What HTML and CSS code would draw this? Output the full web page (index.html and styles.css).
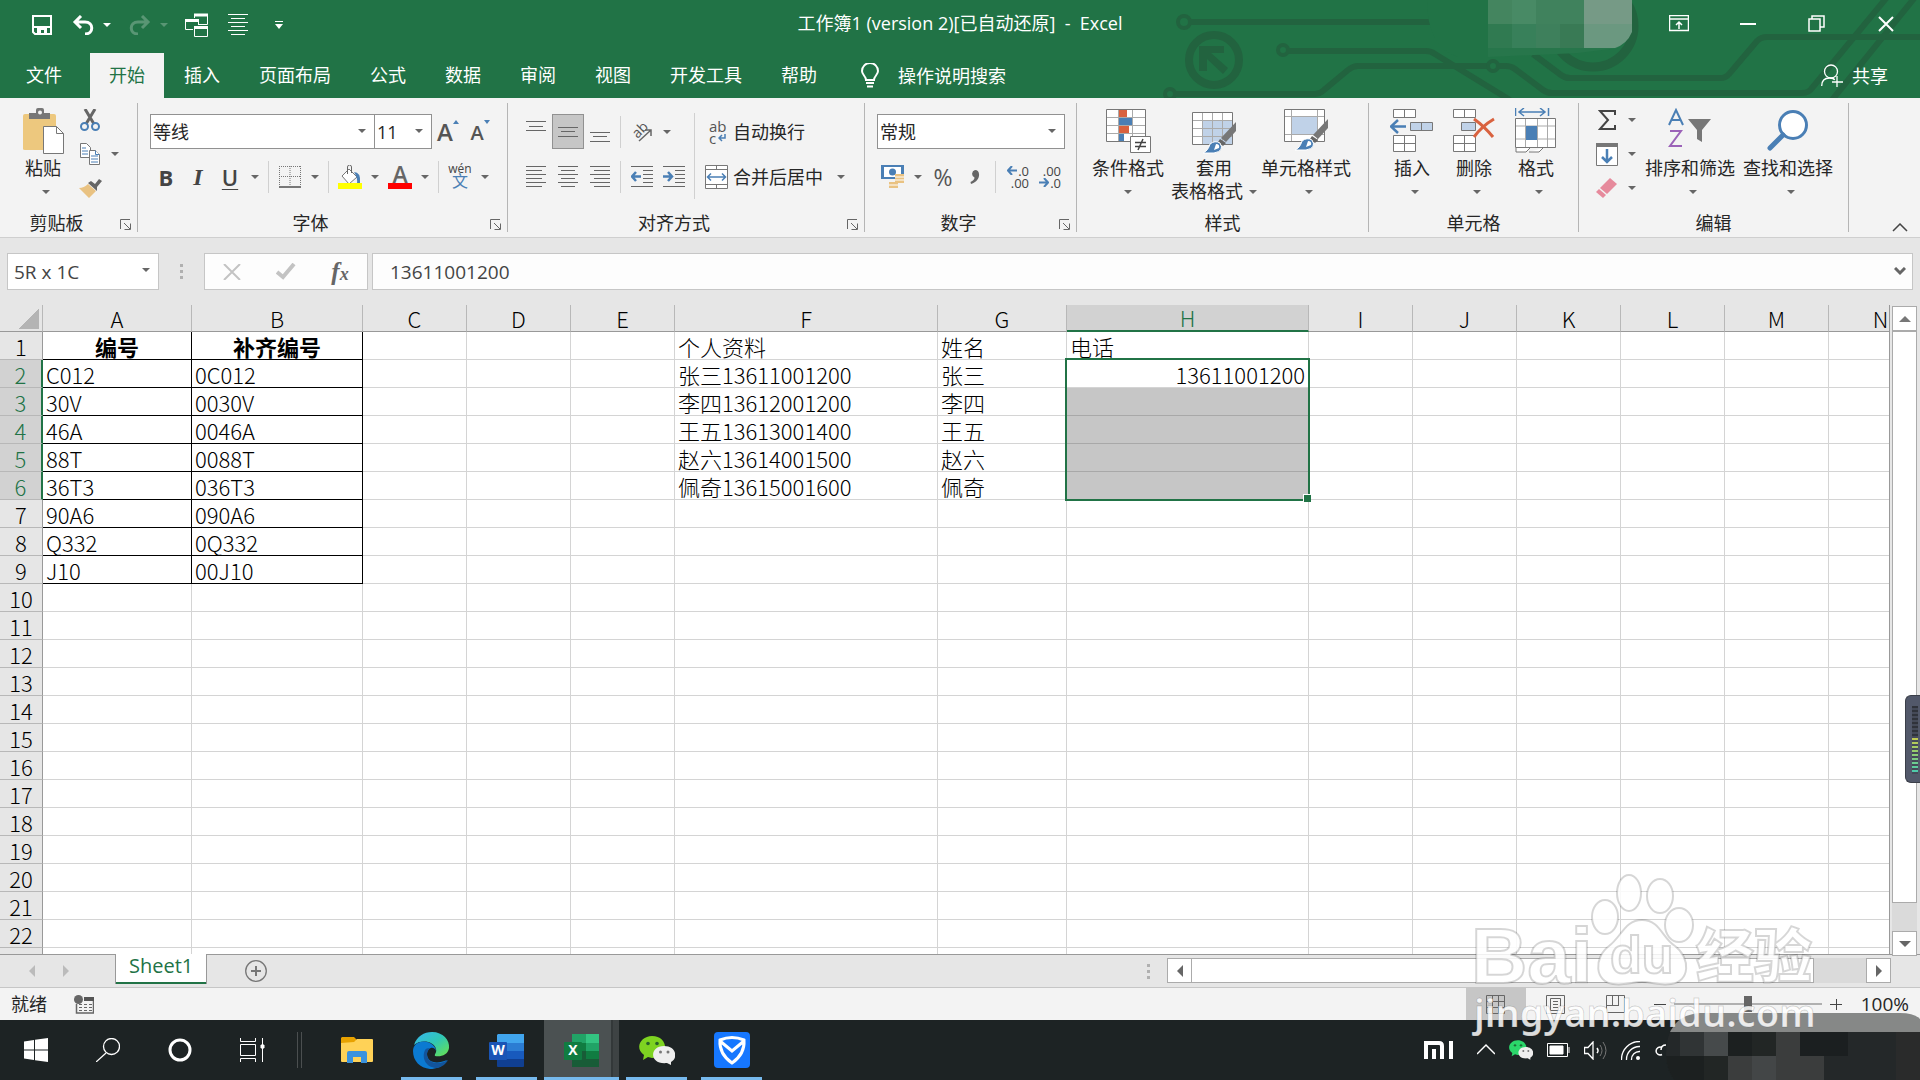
FILE: index.html
```html
<!DOCTYPE html>
<html lang="zh-CN">
<head>
  <meta charset="UTF-8" />
  <meta name="viewport" content="width=device-width, initial-scale=1.0" />
  <title>工作簿1 - Excel</title>
  <link rel="stylesheet" href="styles.css">
</head>
<body>
  <header class="header">
    <svg class="circuit" width="760" height="98" viewBox="0 0 760 98" fill="none" stroke="#22633f" stroke-width="6">
      <circle cx="24" cy="22" r="6" stroke-width="4"/><path d="M31 22H300"/>
      <circle cx="54" cy="60" r="25" stroke-width="8"/>
      <path d="M39 46h25v7H51l17 15-5 6-16-15v12h-8z" fill="#22633f" stroke="none"/>
      <circle cx="123" cy="50" r="5" stroke-width="4"/><path d="M129 51H266q5 0 9 3L350 100"/>
      <circle cx="10" cy="94" r="5" stroke-width="4"/><path d="M16 94H155q5 0 9-4l24-20q5-4 10-4H328"/>
      <circle cx="333" cy="66" r="5" stroke-width="4"/><path d="M339 66h7q5 0 9 3l28 21q4 3 9 3H642q7 0 10-5L728-4"/>
      <path d="M373 54l28 21q4 3 9 3H560q6 0 9-4l28-33q4-4 10-4H760"/><path d="M672 100L756-4"/>
      <circle cx="433" cy="26" r="41" stroke-width="9"/>
      <g stroke="none">
        <path d="M267 0h61v57h-30q-31-10-31-57z" fill="#217346"/>
        <path d="M328 24h130v24l-40 5-90 4z" fill="#27764b"/>
        <path d="M328 0h24v24h-24z" fill="#44855f"/><path d="M352 0h24v24h-24z" fill="#488a65"/><path d="M376 0h48v24h-48z" fill="#40825d"/>
        <path d="M328 24h24v24h-24z" fill="#307a51"/><path d="M352 24h24v24h-24z" fill="#38805a"/><path d="M376 24h24v24h-24z" fill="#3e805c"/><path d="M400 24h24v24h-24z" fill="#397a55"/>
        <path d="M424 0h48v24h-48z" fill="#769a86"/><path d="M424 24h48v8q-5 12-17 16h-31z" fill="#6b9880"/>
      </g>
    </svg>
    <div class="titlebar">
      <div class="qat">
        <button aria-label="保存"><svg width="20" height="20" viewBox="0 0 20 20"><path d="M1 1h18v18H3l-2-2z" fill="none" stroke="#fff" stroke-width="2"/><path d="M2 11h16v2H2zM5 13h10v6h-3v-4H9v4H5z" fill="#fff"/></svg></button>
        <span><button aria-label="撤消"><svg width="22" height="20" viewBox="0 0 22 20" fill="none" stroke="#fff" stroke-width="3"><path d="M9 1L3 7l6 6M3 7h10c9 0 9 12 0 12"/></svg></button><button class="drop" aria-label="撤消列表"><i class="caret"></i></button></span>
        <span class="dim"><button aria-label="恢复"><svg width="22" height="20" viewBox="0 0 22 20" fill="none" stroke="#fff" stroke-width="3"><path d="M13 1l6 6-6 6M19 7H9c-9 0-9 12 0 12"/></svg></button><button class="drop" aria-label="恢复列表"><i class="caret"></i></button></span>
        <button aria-label="切换窗口"><svg width="24" height="24" viewBox="0 0 24 24" fill="none" stroke="#fff"><path d="M9.500 5V1.500h13v10H14M8 16.500H.5v-10h13V12M9.500 13.500h13v10h-13z"/><path d="M9 2h14M0 7.500h14M9 14.500h14" stroke-width="3"/></svg></button>
        <button aria-label="居中"><svg width="20" height="22" viewBox="0 0 20 22" stroke="#fff"><path d="M0 .5h20M3 4.500h14M0 8.500h20M3 12.500h14M0 16.500h20M3 20.500h14"/></svg></button>
        <button aria-label="自定义快速访问工具栏"><svg width="8" height="8" viewBox="0 0 8 8" fill="#fff"><path d="M0 0h8v1H0zM0 3h8L4 8z"/></svg></button>
      </div>
      <div class="title">工作簿1 (version 2)[已自动还原]&nbsp; -&nbsp; Excel</div>
      <div class="winbtns">
        <button aria-label="功能区显示选项"><svg width="20" height="17" viewBox="0 0 20 17" fill="none" stroke="#fff"><path d="M.5.5h19v15H.5zM1 4h18M10 14V7M7 10l3-3 3 3" stroke-width="1.500"/></svg></button>
        <button aria-label="最小化"><svg width="16" height="17" viewBox="0 0 16 17" stroke="#fff"><path d="M0 9h16" stroke-width="2"/></svg></button>
        <button aria-label="还原"><svg width="17" height="17" viewBox="0 0 17 17" fill="none" stroke="#fff" stroke-width="1.500"><path d="M1 4h11v12H1zM4 4V1h12v11h-4"/></svg></button>
        <button aria-label="关闭"><svg width="16" height="16" viewBox="0 0 16 16" stroke="#fff" stroke-width="2"><path d="M1 1l14 14M15 1L1 15"/></svg></button>
      </div>
    </div>
    <nav class="tabs">
      <a href="#" class="file">文件</a>
      <a href="#" class="active">开始</a>
      <a href="#">插入</a>
      <a href="#">页面布局</a>
      <a href="#">公式</a>
      <a href="#">数据</a>
      <a href="#">审阅</a>
      <a href="#">视图</a>
      <a href="#">开发工具</a>
      <a href="#">帮助</a>
      <button class="tell"><svg width="18" height="25" viewBox="0 0 18 25" fill="none" stroke="#fff" stroke-width="2"><path d="M5 17c0-4-4-5-4-9a8 8 0 0 1 16 0c0 4-4 5-4 9zM5 20h8M6 23.500h6"/></svg>操作说明搜索</button>
      <button class="share"><svg width="22" height="23" viewBox="0 0 22 23" fill="none" stroke="#fff" stroke-width="1.300"><circle cx="10" cy="7.500" r="6.500"/><path d="M.7 22c0-5 3-8 8-8 2 0 4 0 5 2M16 12v11M11 18h11"/></svg>共享</button>
    </nav>
  </header>

  <section class="ribbon">
    <div class="group g-clip">
      <div class="body">
        <button class="big paste"><svg width="41" height="46" viewBox="0 0 41 46"><path d="M2 6h29q2 0 2 2v33q0 1-2 1H2q-2 0-2-1V8q0-2 2-2z" fill="#edc87e"/><path d="M6 5h7V2q0-2 2-2h4q2 0 2 2v3h6v6H6z" fill="#777"/><circle cx="17" cy="4.500" r="2" fill="#f3f3f3"/><path d="M20.500 18.500h13l7 7v20h-20z" fill="#fff" stroke="#777"/><path d="M33.500 18.500v7h7" fill="none" stroke="#777"/></svg><span>粘贴</span><span class="line"><i class="caret"></i></span></button>
        <div class="stack">
          <div><button class="tool" aria-label="剪切"><svg width="20" height="22" viewBox="0 0 20 22" fill="none"><path d="M5 0l9 15M15 0L6 15" stroke="#666" stroke-width="3"/><circle cx="4.500" cy="17.500" r="3.500" stroke="#4a7fb5" stroke-width="2"/><circle cx="15.500" cy="17.500" r="3.500" stroke="#4a7fb5" stroke-width="2"/></svg></button></div>
          <div><button class="tool" aria-label="复制"><svg width="20" height="22" viewBox="0 0 20 22" fill="#fff" stroke="#777"><path d="M.5.5h6l4 4v10H.5z"/><path d="M2 5h4M2 8h6M2 11h6" stroke="#4a7fb5"/><path d="M9.500 7.500h6l4 4v10h-10z"/><path d="M15.500 7.500v4h4M11 13h7M11 16h7M11 19h7" stroke="#4a7fb5"/></svg></button><button class="drop" aria-label="复制选项"><i class="caret"></i></button></div>
          <div><button class="tool" aria-label="格式刷"><svg width="23" height="20" viewBox="0 0 23 20"><path d="M0 10q5 0 9-4l8 7-7 7z" fill="#e9c282"/><path d="M9 5l3-2 4 3 4-5 3 2-5 6v4z" fill="#666"/></svg></button></div>
        </div>
      </div>
      <div class="foot"><span>剪贴板</span><button aria-label="剪贴板设置"><svg class="launch" width="11" height="11" viewBox="0 0 11 11" fill="none" stroke="#666"><path d="M.5 10V.5H10M4 4l6 6M10.500 4.500v6h-6"/></svg></button></div>
    </div>

    <div class="group g-font">
      <div class="body rows">
        <div class="row">
          <div class="combo c-font"><select aria-label="字体"><option>等线</option></select><i class="caret"></i></div>
          <div class="combo c-size"><select aria-label="字号"><option>11</option></select><i class="caret"></i></div>
          <button class="tool fa" aria-label="增大字号"><b class="fa-big">A</b><svg width="6" height="4" viewBox="0 0 6 4"><path d="M0 4h6L3 0z" fill="#4a7fb5"/></svg></button>
          <button class="tool fa" aria-label="减小字号"><b class="fa-small">A</b><svg width="6" height="4" viewBox="0 0 6 4"><path d="M0 0h6L3 4z" fill="#4a7fb5"/></svg></button>
        </div>
        <div class="row">
          <button class="tool b">B</button><button class="tool i">I</button><button class="tool u">U</button><button class="drop" aria-label="下划线"><i class="caret"></i></button>
          <i class="sep"></i>
          <button class="tool" aria-label="边框"><svg width="22" height="22" viewBox="0 0 22 22" fill="none" stroke="#777"><path d="M.5 0v20M21.500 0v20M11 0v20M0 .5h22M0 10.500h22" stroke-dasharray="1 1"/><path d="M0 21h22" stroke-width="2"/></svg></button><button class="drop" aria-label="边框选项"><i class="caret"></i></button>
          <i class="sep"></i>
          <button class="tool" aria-label="填充颜色"><svg width="24" height="24" viewBox="0 0 24 24"><path d="M11 4l8 8-8 7-7-8z" fill="#fff" stroke="#777"/><path d="M9.500 9V2q0-2 2-2t2 2v6" fill="none" stroke="#666"/><path d="M16 7q7 0 6 11l-3 1q1-6-3-12z" fill="#4a7fb5"/><path d="M0 18h24v6H0z" fill="#ff0"/></svg></button><button class="drop" aria-label="填充颜色选项"><i class="caret"></i></button>
          <button class="tool fontcolor" aria-label="字体颜色">A</button><button class="drop" aria-label="字体颜色选项"><i class="caret"></i></button>
          <i class="sep"></i>
          <button class="tool wen" aria-label="拼音"><span>wén</span><em>文</em></button><button class="drop" aria-label="拼音选项"><i class="caret"></i></button>
        </div>
      </div>
      <div class="foot"><span>字体</span><button aria-label="字体设置"><svg class="launch" width="11" height="11" viewBox="0 0 11 11" fill="none" stroke="#666"><path d="M.5 10V.5H10M4 4l6 6M10.500 4.500v6h-6"/></svg></button></div>
    </div>

    <div class="group g-align">
      <div class="body">
        <div class="rows">
          <div class="row">
            <button class="tool" aria-label="顶端对齐"><svg width="20" height="22" viewBox="0 0 20 22" stroke="#666"><path d="M0 .5h20M3 5.500h14M0 9.500h20"/></svg></button>
            <button class="tool on" aria-label="垂直居中"><svg width="20" height="22" viewBox="0 0 20 22" stroke="#666"><path d="M0 6.500h20M3 10.500h14M0 15.500h20"/></svg></button>
            <button class="tool" aria-label="底端对齐"><svg width="20" height="22" viewBox="0 0 20 22" stroke="#666"><path d="M0 11.500h20M3 15.500h14M0 20.500h20"/></svg></button>
            <i class="sep"></i>
            <button class="tool" aria-label="方向"><svg width="22" height="22" viewBox="0 0 22 22"><text x="0" y="14" transform="rotate(-45 8 8)" class="ab">ab</text><path d="M8 20L20 9M14 9h6v6" fill="none" stroke="#666" stroke-width="1.500"/></svg></button><button class="drop" aria-label="方向选项"><i class="caret"></i></button>
          </div>
          <div class="row">
            <button class="tool" aria-label="左对齐"><svg width="20" height="22" viewBox="0 0 20 22" stroke="#666"><path d="M0 .5h20M0 4.500h16M0 8.500h20M0 12.500h16M0 16.500h20M0 20.500h16"/></svg></button>
            <button class="tool" aria-label="居中"><svg width="20" height="22" viewBox="0 0 20 22" stroke="#666"><path d="M0 .5h20M3 4.500h14M0 8.500h20M3 12.500h14M0 16.500h20M3 20.500h14"/></svg></button>
            <button class="tool" aria-label="右对齐"><svg width="20" height="22" viewBox="0 0 20 22" stroke="#666"><path d="M0 .5h20M4 4.500h16M0 8.500h20M4 12.500h16M0 16.500h20M4 20.500h16"/></svg></button>
            <i class="sep"></i>
            <button class="tool" aria-label="减少缩进量"><svg width="22" height="22" viewBox="0 0 22 22" stroke="#666"><path d="M0 .5h22M12 4.500h10M12 8.500h10M12 12.500h10M12 16.500h10M0 20.500h22"/><path d="M5 6l-4 4.500 4 4.500M1 10.500h9" fill="none" stroke="#4a7fb5" stroke-width="2.500"/></svg></button>
            <button class="tool" aria-label="增加缩进量"><svg width="22" height="22" viewBox="0 0 22 22" stroke="#666"><path d="M0 .5h22M12 4.500h10M12 8.500h10M12 12.500h10M12 16.500h10M0 20.500h22"/><path d="M5 6l4 4.500-4 4.500M0 10.500h9" fill="none" stroke="#4a7fb5" stroke-width="2.500"/></svg></button>
          </div>
        </div>
        <i class="sep tall"></i>
        <div class="rows">
          <div class="row">
            <button class="wide"><span class="wrapicon"><span>ab</span><span>c<svg width="8" height="8" viewBox="0 0 8 8" fill="none" stroke="#4a7fb5" stroke-width="1.500"><path d="M7 0v4H1M4 1L1 4l3 3"/></svg></span></span>自动换行</button>
          </div>
          <div class="row">
            <button class="wide"><svg width="24" height="24" viewBox="0 0 24 24" fill="#fff" stroke="#777"><path d="M.5.500h22v23H.5zM.5 4.500h22M.5 19.500h22M11.500.500v4M11.500 19.500v4" /><path d="M3 12h17M6 8.500L2.500 12 6 15.500M17 8.500l3.500 3.500-3.500 3.500" fill="none" stroke="#4a7fb5" stroke-width="1.500"/></svg>合并后居中</button><button class="drop far" aria-label="合并选项"><i class="caret"></i></button>
          </div>
        </div>
      </div>
      <div class="foot"><span>对齐方式</span><button aria-label="对齐设置"><svg class="launch" width="11" height="11" viewBox="0 0 11 11" fill="none" stroke="#666"><path d="M.5 10V.5H10M4 4l6 6M10.500 4.500v6h-6"/></svg></button></div>
    </div>

    <div class="group g-num">
      <div class="body rows">
        <div class="row"><div class="combo c-num"><select aria-label="数字格式"><option>常规</option></select><i class="caret"></i></div></div>
        <div class="row">
          <button class="tool" aria-label="会计数字格式"><svg width="24" height="24" viewBox="0 0 24 24"><path d="M0 0h23v14H0z" fill="#4a7fb5"/><path d="M3 2h17v10H3z" fill="#fff"/><circle cx="11.500" cy="7" r="3.500" fill="#4a7fb5"/><path d="M14 9h9v9h-9zM8 17h9v6H8z" fill="#e9c282"/><path d="M14 12h9M14 15h9M8 20h9" stroke="#fff"/></svg></button><button class="drop" aria-label="货币"><i class="caret"></i></button>
          <button class="tool pct">%</button>
          <button class="tool" aria-label="千位分隔样式"><svg width="10" height="16" viewBox="0 0 10 16"><path d="M5 1c6 0 6 11-4 14l-.5-2q4-2 4-4.500A4 4 0 0 1 5 1z" fill="#666"/></svg></button>
          <i class="sep"></i>
          <button class="tool dec" aria-label="增加小数位数"><span><svg width="10" height="9" viewBox="0 0 10 9" fill="none" stroke="#4a7fb5" stroke-width="2"><path d="M5 0L1 4.500 5 9M1 4.500h9"/></svg>.0</span><span>.00</span></button>
          <button class="tool dec" aria-label="减少小数位数"><span>.00</span><span><svg width="10" height="9" viewBox="0 0 10 9" fill="none" stroke="#4a7fb5" stroke-width="2"><path d="M5 0l4 4.500L5 9M0 4.500h9"/></svg>.0</span></button>
        </div>
      </div>
      <div class="foot"><span>数字</span><button aria-label="数字设置"><svg class="launch" width="11" height="11" viewBox="0 0 11 11" fill="none" stroke="#666"><path d="M.5 10V.5H10M4 4l6 6M10.500 4.500v6h-6"/></svg></button></div>
    </div>

    <div class="group g-style">
      <div class="body">
        <button class="big"><svg width="45" height="46" viewBox="0 0 45 46"><path d="M.5 1.500h39v32H.5z" fill="#fff" stroke="#777"/><path d="M1 9.500h38M1 17.500h38M1 25.500h38M12.500 2v31M26.500 2v31" stroke="#aaa"/><path d="M13 2h8v7h-8zM13 18h10v7H13z" fill="#d9623f"/><path d="M13 10h13v7H13zM13 26h5v7h-5z" fill="#4a7fb5"/><path d="M24.500 28.500h20v16h-20z" fill="#fff" stroke="#777"/><path d="M29 34.500h11M29 38.500h11M37 31l-5 11" stroke="#444" stroke-width="1.500"/></svg><span>条件格式</span><span class="line"><i class="caret"></i></span></button>
        <button class="big"><svg width="45" height="46" viewBox="0 0 45 46"><path d="M.5 4.500h40v32H.5z" fill="#fff" stroke="#777"/><path d="M11 13h29v23H11z" fill="#c0d2e8"/><path d="M1 12.500h39M1 20.500h39M1 28.500h39M10.500 5v31M20.500 5v31M30.500 5v31" stroke="#aaa"/><path d="M44 14v9L34 34l-5-4z" fill="#777"/><path d="M28 31l6 4-3 3-5-4z" fill="#666"/><path d="M11 45q5-2 7-9 5-4 10-1 5 8-6 10z" fill="#4a7fb5" stroke="#fff"/><path d="M24 36q4 0 3 4l-5 2z" fill="#fff"/></svg><span>套用</span><span class="line">表格格式 <i class="caret"></i></span></button>
        <button class="big wider"><svg width="45" height="46" viewBox="0 0 45 46"><path d="M.5 1.500h40v32H.5z" fill="#fff" stroke="#777"/><path d="M8 9h25v17H8z" fill="#c0d2e8"/><path d="M1 8.500h39M1 26.500h39M7.500 2v31M33.500 2v31" stroke="#aaa"/><path d="M44 11v9L34 31l-5-4z" fill="#777"/><path d="M28 28l6 4-3 3-5-4z" fill="#666"/><path d="M11 42q5-2 7-9 5-4 10-1 5 8-6 10z" fill="#4a7fb5" stroke="#fff"/><path d="M24 33q4 0 3 4l-5 2z" fill="#fff"/></svg><span>单元格样式</span><span class="line"><i class="caret"></i></span></button>
      </div>
      <div class="foot"><span>样式</span></div>
    </div>

    <div class="group g-cell">
      <div class="body">
        <button class="big narrow"><svg width="44" height="46" viewBox="0 0 44 46" fill="#fff" stroke="#777"><path d="M3.500 1.500h22v8h-22zM14.500 1.500v8M3.500 27.500h22v16h-22zM14.500 27.500v16M3.500 35.500h22"/><path d="M20.500 14.500h22v8h-22zM31.500 14.500v8" fill="#c0d2e8"/><path d="M8 12l-7 6.500L8 25M1 18.500h15" fill="none" stroke="#4a7fb5" stroke-width="2.500"/></svg><span>插入</span><span class="line"><i class="caret"></i></span></button>
        <button class="big narrow"><svg width="44" height="46" viewBox="0 0 44 46" fill="#fff" stroke="#777"><path d="M1.500 1.500h22v8h-22zM12.500 1.500v8M1.500 27.500h22v16h-22zM12.500 27.500v16M1.500 35.500h22"/><path d="M9.500 14.500h14v8h-14z" fill="#c0d2e8"/><path d="M22 11q10 7 19 18M42 11Q30 18 22 29" fill="none" stroke="#d9623f" stroke-width="3"/></svg><span>删除</span><span class="line"><i class="caret"></i></span></button>
        <button class="big narrow"><svg width="42" height="46" viewBox="0 0 42 46" fill="#fff" stroke="#777"><path d="M.5 10.500h40v29H.5z"/><path d="M1 18h39M1 31h39M10.500 11v28M22.500 11v28M32.500 11v28" stroke="#aaa"/><path d="M11 18h11v14H11z" fill="#4a7fb5" stroke="none"/><path d="M1 40v4h10l4-4M14 44h10l4-4"/><path d="M.5 0v8M33.500 0v8M5 4h24M9 0L4 4l5 4M25 0l5 4-5 4" fill="none" stroke="#4a7fb5" stroke-width="1.500"/></svg><span>格式</span><span class="line"><i class="caret"></i></span></button>
      </div>
      <div class="foot"><span>单元格</span></div>
    </div>

    <div class="group g-edit">
      <div class="body">
        <div class="stack">
          <div><button class="tool" aria-label="自动求和"><svg width="18" height="20" viewBox="0 0 18 20"><path d="M17 5V1H2l8 9-8 9h15v-4" fill="none" stroke="#444" stroke-width="2"/></svg></button><button class="drop" aria-label="求和选项"><i class="caret"></i></button></div>
          <div><button class="tool" aria-label="填充"><svg width="22" height="23" viewBox="0 0 22 23"><path d="M.5.500h21v22H.5z" fill="#fff" stroke="#777"/><path d="M0 0h22v4H0z" fill="#777"/><path d="M11 6v13M6 14l5 5 5-5" fill="none" stroke="#4a7fb5" stroke-width="2.500"/></svg></button><button class="drop" aria-label="填充选项"><i class="caret"></i></button></div>
          <div><button class="tool" aria-label="清除"><svg width="22" height="20" viewBox="0 0 22 20"><path d="M14 0l7 6-10 10-7-6z" fill="#e68a9c"/><path d="M3 11l7 6-3 3-7-6z" fill="#e68a9c"/></svg></button><button class="drop" aria-label="清除选项"><i class="caret"></i></button></div>
        </div>
        <button class="big wider"><svg width="44" height="46" viewBox="0 0 44 46" fill="none"><path d="M1 17L8 2l7 15M4 12h8" stroke="#4a7fb5" stroke-width="2"/><path d="M2 23h11L2 38h12" stroke="#9b62b8" stroke-width="2"/><path d="M20 11h23l-9 11v12l-5-3v-9z" fill="#777"/></svg><span>排序和筛选</span><span class="line"><i class="caret"></i></span></button>
        <button class="big wider"><svg width="42" height="46" viewBox="0 0 42 46"><circle cx="26" cy="17" r="13.500" fill="#fff" stroke="#4a7fb5" stroke-width="3"/><path d="M16 27L3 40" stroke="#4a7fb5" stroke-width="5" stroke-linecap="round"/></svg><span>查找和选择</span><span class="line"><i class="caret"></i></span></button>
      </div>
      <div class="foot"><span>编辑</span></div>
    </div>
    <button class="collapse" aria-label="折叠功能区"><svg width="16" height="9" viewBox="0 0 16 9" fill="none" stroke="#444" stroke-width="1.500"><path d="M1 8l7-7 7 7"/></svg></button>
  </section>

  <section class="formula">
    <div class="combo c-name"><select aria-label="名称框"><option>5R x 1C</option></select><i class="caret"></i></div>
    <span class="dots"><i></i><i></i><i></i></span>
    <div class="fxbox">
      <button aria-label="取消"><svg width="18" height="16" viewBox="0 0 18 16" stroke="#c3c3c3" stroke-width="2"><path d="M1 0l16 16M17 0L1 16"/></svg></button>
      <button aria-label="输入"><svg width="20" height="17" viewBox="0 0 20 17" fill="none" stroke="#c3c3c3" stroke-width="4"><path d="M1 9l6 5L18 1"/></svg></button>
      <button class="fx">f<small>x</small></button>
    </div>
    <div class="inputbox"><input type="text" aria-label="编辑栏" value="13611001200"><svg width="12" height="9" viewBox="0 0 12 9" fill="none" stroke="#666" stroke-width="3"><path d="M1 1l5 5 5-5"/></svg></div>
  </section>

  <main class="sheet">
    <div class="gridwrap">
      <table class="grid">
        <colgroup><col class="w-head"><col class="w-a"><col class="w-b"><col><col><col><col class="w-f"><col class="w-g"><col class="w-h"><col><col><col><col><col><col></colgroup>
        <thead><tr id="letters"></tr></thead>
        <tbody id="cells"></tbody>
      </table>
    </div>
    <div class="vscroll">
      <button aria-label="向上"><svg width="12" height="6" viewBox="0 0 12 6"><path d="M0 6h12L6 0z" fill="#777"/></svg></button>
      <div class="thumb"></div>
      <button aria-label="向下"><svg width="12" height="6" viewBox="0 0 12 6"><path d="M0 0h12L6 6z" fill="#666"/></svg></button>
    </div>
  </main>

  <section class="sheetbar">
    <div class="sheetnav">
      <button aria-label="上一个"><svg width="6" height="12" viewBox="0 0 6 12"><path d="M6 0v12L0 6z" fill="#bbb"/></svg></button>
      <button aria-label="下一个"><svg width="6" height="12" viewBox="0 0 6 12"><path d="M0 0v12l6-6z" fill="#bbb"/></svg></button>
    </div>
    <a href="#" class="sheettab">Sheet1</a>
    <button class="addsheet" aria-label="新工作表"><svg width="22" height="22" viewBox="0 0 22 22" fill="none" stroke="#777"><circle cx="11" cy="11" r="10.300" stroke-width="1.300"/><path d="M11 6v10M6 11h10" stroke-width="2"/></svg></button>
    <span class="dots"><i></i><i></i><i></i></span>
    <div class="hscroll">
      <button aria-label="向左"><svg width="6" height="12" viewBox="0 0 6 12"><path d="M6 0v12L0 6z" fill="#666"/></svg></button>
      <div class="thumb"></div>
      <button aria-label="向右"><svg width="6" height="12" viewBox="0 0 6 12"><path d="M0 0v12l6-6z" fill="#666"/></svg></button>
    </div>
  </section>

  <footer class="status">
    <span>就绪</span>
    <svg width="20" height="19" viewBox="0 0 20 19" fill="none" stroke="#666"><path d="M2.500 9v9h17V4" stroke-width="1.500"/><path d="M10 2h10v4H10z" fill="#555" stroke="none"/><circle cx="4.500" cy="4.500" r="4.500" fill="#666" stroke="none"/><path d="M5 9.500h13M5 12.500h13M5 15.500h13" stroke-dasharray="3 2"/></svg>
    <div class="views">
      <button class="on" aria-label="普通"><svg width="19" height="19" viewBox="0 0 19 19" fill="none" stroke="#666"><path d="M.5.500h18v18H.5zM.5 6.500h18M.5 12.500h18M6.500.500v18M12.500.500v18"/></svg></button>
      <button aria-label="页面布局"><svg width="19" height="19" viewBox="0 0 19 19" fill="none" stroke="#666"><path d="M.5.500h18v18H.5zM4.500 3.500h10v12h-10zM7 6.500h5M7 9.500h5M7 12.500h5"/></svg></button>
      <button aria-label="分页预览"><svg width="19" height="19" viewBox="0 0 19 19" fill="none" stroke="#666"><path d="M.5.500h18v17H.5zM6.500 1v10M12.500 1v10M0 10.500h13"/></svg></button>
    </div>
    <div class="zoom">
      <button aria-label="缩小"><svg width="12" height="12" viewBox="0 0 12 12" stroke="#444"><path d="M0 6.500h12"/></svg></button>
      <input type="range" aria-label="缩放" min="0" max="100" value="50">
      <button aria-label="放大"><svg width="12" height="12" viewBox="0 0 12 12" stroke="#444"><path d="M0 6.500h12M6.500 1v11"/></svg></button>
      <span>100%</span>
    </div>
  </footer>

  <div class="taskbar">
    <button class="sys" aria-label="开始"><svg width="24" height="24" viewBox="0 0 24 24" fill="#fff"><path d="M0 3.500L10 2v9.500H0zM11 1.800L24 0v11.500H11zM0 12.500h10V22L0 20.500zM11 12.500h13V24l-13-1.800z"/></svg></button>
    <button class="sys" aria-label="搜索"><svg width="24" height="24" viewBox="0 0 24 24" fill="none" stroke="#fff" stroke-width="1.300"><circle cx="15.500" cy="8.500" r="8"/><path d="M10 15L0 24"/></svg></button>
    <button class="sys" aria-label="Cortana"><svg width="24" height="24" viewBox="0 0 24 24" fill="none" stroke="#fff" stroke-width="3"><circle cx="12" cy="12" r="10"/></svg></button>
    <button class="sys" aria-label="任务视图"><svg width="25" height="24" viewBox="0 0 25 24" fill="none" stroke="#fff"><path d="M.5 0v3.500h15V0M.5 6.500h15v11H.5zM.5 24v-3.500h15V24M22.500 0v24"/><path d="M21 7h3v3h-3z" fill="#fff"/></svg></button>
    <i class="split"></i>
    <button class="app" aria-label="文件资源管理器"><svg width="32" height="27" viewBox="0 0 32 27"><path d="M1 0h12l3 3v4H0V1z" fill="#e8a200"/><path d="M0 6l13-1 3-3h15q1 0 1 1v21q0 1-1 1H1q-1 0-1-1z" fill="#ffd257"/><path d="M8 14h16q2 0 2 2v10h-6v-6h-8v6H6V16q0-2 2-2z" fill="#3b92dd"/></svg></button>
    <button class="app run" aria-label="Edge"><svg width="37" height="37" viewBox="0 0 37 37"><defs><linearGradient id="eg" x1="0" y1="0" x2="1" y2="1"><stop offset="0" stop-color="#36b5f2"/><stop offset=".5" stop-color="#30c7b5"/><stop offset="1" stop-color="#6be34b"/></linearGradient></defs><path d="M1 13C4 4 11 0 19 0c11 0 18 8 17 16-1 7-8 9-14 8-1-2 2-3 1-7C21 9 8 7 1 13z" fill="url(#eg)"/><path d="M0 19c0-8 9-12 17-8 4 2 6 5 6 8-2-6-9-3-9 3 0 8 9 11 20 6-4 7-11 9-17 9C7 36 0 29 0 19z" fill="#0b7ad1"/><path d="M12 18c-4 9 2 18 12 18 5-1 9-4 11-8-10 6-21 3-21-6q0-3 3-6-4 0-5 2z" fill="#12549b"/></svg></button>
    <button class="app run office" aria-label="Word"><svg width="36" height="33" viewBox="0 0 36 33"><path d="M9 0h26v9H8V1z" fill="#41a5ee"/><path d="M8 9h27v8H8z" fill="#2b7cd3"/><path d="M8 17h27v8H8z" fill="#185abd"/><path d="M8 25h27v7q0 1-1 1H9q-1 0-1-1z" fill="#103f91"/><rect y="8" width="18" height="18" rx="1" fill="#1a55b6"/></svg><b>W</b></button>
    <button class="app run office current" aria-label="Excel"><svg width="36" height="33" viewBox="0 0 36 33"><path d="M8 0h14v9H8z" fill="#21a366"/><path d="M22 0h13v9H22z" fill="#33c481"/><path d="M8 9h14v8H8zM22 17h13v8H22z" fill="#107c41"/><path d="M22 9h13v8H22z" fill="#21a366"/><path d="M8 17h14v8H8zM8 25h27v8H8z" fill="#185c37"/><rect y="8" width="18" height="18" rx="1" fill="#107c41"/></svg><b>X</b></button>
    <button class="app run" aria-label="微信"><svg width="36" height="29" viewBox="0 0 36 29"><path d="M13 0c17 0 18 22 0 22l-4-1-5 3 1-5C-5 12 2 0 13 0z" fill="#7ed321"/><circle cx="9" cy="7.500" r="1.800" fill="#27622a"/><circle cx="18" cy="7.500" r="1.800" fill="#27622a"/><path d="M25 10c13 0 14 13 7 16v3l-4-2c-18 2-18-17-3-17z" fill="#eee"/><circle cx="21.500" cy="16" r="1.500" fill="#777"/><circle cx="29" cy="16" r="1.500" fill="#777"/></svg></button>
    <button class="app run" aria-label="电脑管家"><svg width="36" height="36" viewBox="0 0 36 36" fill="none" stroke="#fff" stroke-width="3"><rect width="36" height="36" rx="4" fill="#1677ff" stroke="none"/><path d="M6 8q12-5 24 0 1 14-12 23Q5 22 6 8zM6 9l12 10L30 9"/></svg></button>
    <div class="tray">
      <svg width="29" height="18" viewBox="0 0 29 18" fill="#fff"><path d="M0 0h15q5 0 5 5v13h-4V5q0-1-1-1H4v14H0zM8 8h4v10H8zM25 0h4v18h-4z"/></svg>
      <svg width="18" height="18" viewBox="0 0 18 18" fill="none" stroke="#fff" stroke-width="1.500"><path d="M0 13l9-9 9 9"/></svg>
      <svg width="24" height="20" viewBox="0 0 36 29"><path d="M13 0c17 0 18 22 0 22l-4-1-5 3 1-5C-5 12 2 0 13 0z" fill="#2bd66a"/><circle cx="9" cy="7.500" r="1.800" fill="#1b6b36"/><circle cx="18" cy="7.500" r="1.800" fill="#1b6b36"/><path d="M25 10c13 0 14 13 7 16v3l-4-2c-18 2-18-17-3-17z" fill="#eee"/><circle cx="21.500" cy="16" r="1.500" fill="#777"/><circle cx="29" cy="16" r="1.500" fill="#777"/></svg>
      <svg width="23" height="14" viewBox="0 0 23 14" fill="none" stroke="#fff"><path d="M.5.500h20v13H.5zM22 4v6"/><path d="M3 3h13v8H3z" fill="#fff"/></svg>
      <svg width="23" height="19" viewBox="0 0 23 19" fill="none" stroke="#fff"><path d="M.5 6.500H4l5-5.500v17l-5-5.500H.5z" stroke-width="1.300"/><path d="M13 7q2 2.500 0 5" stroke-width="1.500"/><path d="M16 4q4 5.500 0 11M19 1q6 8.500 0 17" stroke="#777"/></svg>
      <svg width="19" height="19" viewBox="0 0 19 19" fill="none" stroke="#fff"><path d="M.5 19A18 18 0 0 1 19 .5M5.500 19A13 13 0 0 1 19 5.500M10.500 19A8 8 0 0 1 19 10.500" stroke-width="1.300"/><circle cx="17" cy="17" r="2" fill="#fff" stroke="none"/></svg>
      <svg width="12" height="12" viewBox="0 0 12 12" fill="none" stroke="#fff" stroke-width="1.500"><path d="M8 3.500a4 4 0 1 0 0 7M12 1q-5 0-5 5"/></svg>
    </div>
  </div>

  <svg class="mosaic" width="254" height="67" viewBox="0 0 254 67">
    <defs><clipPath id="mc"><path d="M34 0h200q14 0 20 6v61H8Q-4 50 2 25 8 2 34 0z"/></clipPath></defs>
    <g clip-path="url(#mc)">
      <path d="M0 0h254v19H0z" fill="#868887"/><path d="M0 19h254v48H0z" fill="#242829"/>
      <path d="M14 19h24v24H14z" fill="#303435"/><path d="M38 19h24v24H38z" fill="#464a4b"/><path d="M62 19h24v24H62zM0 43h38v24H0z" fill="#1c2020"/><path d="M86 19h24v24H86zM38 43h24v24H38z" fill="#222625"/><path d="M110 19h24v24h-24zM62 43h24v24H62zM110 43h48v24h-48z" fill="#3b3d3d"/><path d="M134 19h48v24h-48z" fill="#1b1f20"/><path d="M86 43h24v24H86z" fill="#434647"/><path d="M230 19h24v48h-24z" fill="#2a2b2b"/>
    </g>
  </svg>

  <svg class="watermark" width="350" height="172" viewBox="0 0 350 172">
    <g class="ink">
      <text x="1" y="113" class="wm-bai">Bai</text>
      <ellipse cx="135" cy="47" rx="13" ry="17"/><ellipse cx="159" cy="23" rx="12" ry="18"/><ellipse cx="190" cy="26" rx="13" ry="17"/><ellipse cx="209" cy="55" rx="14" ry="17"/>
      <path d="M172 50c18 0 20 18 33 26 16 12 15 36-4 38-12 2-18-2-29-2s-18 4-29 2c-18-2-20-26-4-38 13-10 16-26 33-26z"/>
      <text x="140" y="103" class="wm-du">du</text>
      <text x="226" y="107" class="wm-cn">经验</text>
    </g>
    <text x="4" y="157" class="wm-url">jingyan.baidu.com</text>
  </svg>

  <div class="meter"><i></i></div>

  <script>
    const letters = "ABCDEFGHIJKLMN".split("");
    const rowCount = 23;
    const data = {
      A: ["编号", "C012", "30V", "46A", "88T", "36T3", "90A6", "Q332", "J10"],
      B: ["补齐编号", "0C012", "0030V", "0046A", "0088T", "036T3", "090A6", "0Q332", "00J10"],
      F: ["个人资料", "张三13611001200", "李四13612001200", "王五13613001400", "赵六13614001500", "佩奇13615001600"],
      G: ["姓名", "张三", "李四", "王五", "赵六", "佩奇"],
      H: ["电话", "13611001200"]
    };

    let head = '<th class="corner"></th>';
    letters.forEach(l => {
      head += `<th class="${l === "H" ? "picked" : ""}">${l}</th>`;
    });
    document.getElementById("letters").innerHTML = head;

    let body = "";
    for (let r = 1; r <= rowCount; r++) {
      const picked = r >= 2 && r <= 6;
      // the last row is only a sliver above the sheet tabs
      body += `<tr><th class="${picked ? "picked" : ""}">${r < rowCount ? r : ""}</th>`;
      letters.forEach(l => {
        const text = (data[l] && data[l][r - 1]) || "";
        const cls = [];
        if ((l === "A" || l === "B") && r <= 9) cls.push(r === 1 ? "boxed bold" : "boxed");
        if (l === "H" && r === 2) cls.push("start");
        if (l === "H" && r > 2 && r <= 6) cls.push("shade");
        const box = l === "H" && r === 2 ? '<div class="selection"></div>' : "";
        body += `<td class="${cls.join(" ")}">${text}${box}</td>`;
      });
      body += "</tr>";
    }
    document.getElementById("cells").innerHTML = body;
  </script>
</body>
</html>
```
FILE: styles.css
```css
* {
  box-sizing: border-box;
}
body {
  margin: 0;
  height: 100vh;
  display: flex;
  flex-direction: column;
  overflow: hidden;
  position: relative;
  background: #e6e6e6;
  color: #262626;
  font-family: "Open Sans", "Noto Sans CJK SC", sans-serif;
  font-size: 18px;
  line-height: 24px;
}
button {
  display: flex;
  align-items: center;
  justify-content: center;
  margin: 0;
  padding: 0;
  border: none;
  background: none;
  color: inherit;
  font: inherit;
  white-space: nowrap;
}
select, input {
  margin: 0;
  border: none;
  outline: none;
  background: none;
  font: inherit;
}
a {
  color: inherit;
  text-decoration: none;
}
svg {
  display: block;
  flex: none;
}
.caret {
  flex: none;
  border: 4px solid transparent;
  border-top-color: #666;
  border-bottom: none;
}

/* title bar and tabs */
.header {
  flex: none;
  position: relative;
  background: #217346;
  color: #fff;
}
.circuit {
  position: absolute;
  top: 0;
  right: 0;
}
.titlebar {
  position: relative;
  display: grid;
  grid-template-columns: 1fr auto 1fr;
  height: 53px;
}
.qat {
  display: flex;
  align-items: center;
  gap: 9px;
  padding: 0 26px;
  height: 49px;
}
.qat span {
  display: flex;
}
.qat button {
  width: 32px;
}
.qat .drop {
  width: 16px;
}
.qat .caret {
  border-top-color: #fff;
}
.qat .dim {
  opacity: 0.25;
}
.title {
  line-height: 46px;
}
.winbtns {
  display: flex;
  justify-content: flex-end;
  height: 47px;
}
.winbtns button {
  width: 69px;
}
.tabs {
  position: relative;
  display: flex;
  gap: 1px;
  line-height: 44px;
  height: 45px;
}
.tabs a {
  padding: 0 19px;
}
.tabs .file {
  padding: 0 27px 0 26px;
}
.tabs .active {
  background: #f3f3f3;
  color: #217346;
}
.tell {
  gap: 19px;
  margin-left: 24px;
}
.share {
  gap: 9px;
  margin-left: auto;
  padding-right: 32px;
}

/* ribbon */
.ribbon {
  flex: none;
  display: flex;
  padding: 5px 0;
  background: #f3f3f3;
  border-bottom: 1px solid #cfcfcf;
}
.group {
  flex: none;
  display: flex;
  flex-direction: column;
  border-right: 1px solid #b5b5b5;
}
.g-clip { width: 138px; }
.g-font { width: 370px; }
.g-align { width: 357px; }
.g-num { width: 212px; }
.g-style { width: 292px; }
.g-cell { width: 210px; }
.g-edit { width: 270px; }
.body {
  display: flex;
  height: 111px;
  padding: 0 0 0 12px;
}
.g-style .body {
  padding-left: 8px;
}
.foot {
  display: flex;
  align-items: center;
  gap: 13px;
  padding: 0 6px;
  height: 18px;
}
.foot span {
  flex: 1;
  line-height: 18px;
  text-align: center;
}
.launch {
  margin-top: 2px;
}
.rows {
  display: flex;
  flex-direction: column;
  gap: 10px;
  padding-top: 11px;
}
.body.rows {
  padding-top: 11px;
}
.row {
  display: flex;
  align-items: center;
  height: 35px;
}
.tool {
  width: 32px;
  height: 35px;
}
.tool.on {
  background: #c6c6c6;
  border: 1px solid #919191;
}
.drop {
  width: 18px;
  height: 35px;
}
.far {
  margin-left: 9px;
}
.sep {
  width: 1px;
  height: 32px;
  margin: 0 5px 0 4px;
  background: #d0d0d0;
}
.sep.tall {
  height: 86px;
  margin-top: 10px;
}
.stack button {
  height: 34px;
}
.stack div {
  display: flex;
}
.big {
  flex-direction: column;
  justify-content: flex-start;
  width: 86px;
  padding-top: 5px;
  line-height: 23px;
}
.big svg {
  margin-bottom: 3px;
}
.paste {
  width: 62px;
}
.narrow {
  width: 62px;
}
.wider {
  width: 98px;
}
.line {
  display: flex;
  align-items: center;
  gap: 6px;
  height: 23px;
}
.paste .line, .narrow .line, .wider .line {
  padding-left: 6px;
}
.wide {
  gap: 4px;
  padding-left: 5px;
}
.combo {
  position: relative;
  height: 35px;
  background: #fff;
  border: 1px solid #919191;
}
.combo select {
  appearance: none;
  width: 100%;
  height: 100%;
  padding: 0 2px;
  color: #262626;
}
.combo .caret {
  position: absolute;
  top: 14px;
  right: 8px;
}
.c-font {
  width: 225px;
  margin-right: -1px;
}
.c-size { width: 58px; }
.c-num { width: 188px; }
.fa {
  align-items: flex-start;
  color: #555;
}
.fa svg {
  margin-top: 6px;
}
.fa-big, .fa-small {
  font-size: 24px;
  font-weight: 600;
  line-height: 36px;
}
.fa-small {
  font-size: 20px;
  line-height: 38px;
}
.b, .i, .u {
  color: #444;
  font-size: 22px;
  font-weight: 700;
}
.i {
  font-family: "Liberation Serif", serif;
  font-size: 24px;
  font-style: italic;
}
.u {
  font-weight: 600;
  text-decoration: underline;
  text-decoration-thickness: 1px;
  text-underline-offset: 3px;
}
.fontcolor {
  width: 24px;
  height: 24px;
  margin: 0 4px;
  border-bottom: 6px solid #f00;
  color: #666;
  font-size: 23px;
  font-weight: 600;
  line-height: 18px;
}
.wen {
  flex-direction: column;
  color: #444;
  font-size: 12px;
  line-height: 9px;
}
.wen em {
  color: #4a7fb5;
  font-size: 16px;
  font-style: normal;
  line-height: 16px;
}
.ab {
  fill: #555;
  font-size: 14px;
}
.wrapicon {
  width: 24px;
  color: #555;
  font-size: 15px;
  line-height: 12px;
}
.wrapicon span {
  display: flex;
  align-items: center;
  gap: 2px;
  padding-left: 4px;
}
.pct {
  color: #555;
  font-size: 23px;
}
.dec {
  flex-direction: column;
  align-items: flex-end;
  padding-right: 4px;
  color: #444;
  font-size: 13px;
  line-height: 12px;
}
.dec span {
  display: flex;
  align-items: center;
  gap: 1px;
}
.collapse {
  align-self: flex-end;
  width: 20px;
  margin: 0 10px 0 auto;
}

/* formula bar */
.formula {
  flex: none;
  display: flex;
  align-items: center;
  padding: 15px 7px;
  color: #444;
  font-size: 19px;
}
.c-name {
  width: 152px;
  height: 37px;
  border-color: #c6c6c6;
}
.c-name select {
  padding: 0 6px;
  color: #444;
}
.c-name .caret, .c-num .caret {
  right: 8px;
}
.dots {
  display: flex;
  flex-direction: column;
  gap: 3px;
  padding: 0 21px;
}
.dots i {
  width: 3px;
  height: 3px;
  background: #b0b0b0;
}
.fxbox, .inputbox {
  display: flex;
  align-items: center;
  height: 37px;
  background: #fdfdfd;
  border: 1px solid #c6c6c6;
}
.fxbox {
  width: 164px;
  margin-right: 4px;
}
.fxbox button {
  width: 54px;
}
.fx {
  color: #666;
  font-family: "Liberation Serif", serif;
  font-size: 25px;
  font-style: italic;
  font-weight: 700;
}
.fx small {
  padding-top: 4px;
  font-size: 18px;
}
.inputbox {
  flex: 1;
  padding: 0 6px 0 15px;
}
.inputbox input {
  flex: 1;
  color: #444;
}

/* grid */
.sheet {
  flex: 1;
  display: flex;
  min-height: 0;
  border-bottom: 1px solid #999;
}
.gridwrap {
  flex: 1;
  min-width: 0;
  overflow: hidden;
  border-right: 1px solid #999;
}
.grid {
  width: 1933px;
  table-layout: fixed;
  border-collapse: separate;
  border-spacing: 0;
  background: #fff;
  color: #000;
  font-family: "Noto Sans CJK SC", sans-serif;
  font-size: 22px;
  font-weight: 300;
  line-height: 26px;
}
col { width: 104px; }
.w-head { width: 43px; }
.w-a { width: 149px; }
.w-b { width: 171px; }
.w-f { width: 263px; }
.w-g { width: 129px; }
.w-h { width: 242px; }
.grid th, .grid td {
  height: 28px;
  padding: 0 3px;
  border-right: 1px solid #d4d4d4;
  border-bottom: 1px solid #d4d4d4;
  white-space: nowrap;
}
.grid td {
  text-align: left;
}
.grid th {
  padding: 0;
  background: #e6e6e6;
  border-color: #b8b8b8;
  font-weight: 300;
}
.grid thead th {
  height: 27px;
  border-bottom-color: #999;
  line-height: 25px;
}
.grid tbody th {
  border-right-color: #999;
}
.grid .corner {
  background: linear-gradient(135deg, transparent 50%, #b4b4b4 50%) 19px 4px / 20px 20px no-repeat #e6e6e6;
}
.grid th.picked {
  background: #d2d2d2;
  color: #217346;
}
.grid thead .picked {
  border-bottom: 2px solid #217346;
}
.grid tbody .picked {
  border-right: 2px solid #217346;
}
.grid .boxed {
  border-color: #000;
}
.grid .bold {
  font-weight: 700;
  text-align: center;
}
.grid .start {
  position: relative;
  text-align: right;
}
.grid .shade {
  background: #c6c6c6;
  border-bottom-color: #a8a8a8;
}
.selection {
  position: absolute;
  top: -2px;
  left: -2px;
  width: 245px;
  height: 143px;
  border: 2px solid #217346;
}
.selection::after {
  content: "";
  position: absolute;
  right: -3px;
  bottom: -3px;
  width: 7px;
  height: 7px;
  background: #217346;
  border: solid #fff;
  border-width: 1px 0 0 1px;
}
.vscroll {
  display: flex;
  flex-direction: column;
  width: 25px;
  margin: 1px 3px -2px 2px;
  background: #dadada;
}
.vscroll button, .hscroll button, .thumb {
  flex: none;
  width: 25px;
  height: 25px;
  background: #fff;
  border: 1px solid #ababab;
}
.vscroll .thumb {
  flex: 1;
  margin-bottom: 28px;
}

/* sheet tabs */
.sheetbar {
  flex: none;
  display: flex;
  height: 33px;
  border-bottom: 1px solid #c6c6c6;
}
.sheetnav {
  display: flex;
  width: 115px;
  padding-left: 15px;
}
.sheetnav button {
  width: 34px;
}
.sheettab {
  height: 30px;
  margin-top: -1px;
  padding: 0 13px;
  background: #fff;
  border: solid #999;
  border-width: 0 1px;
  box-shadow: inset 0 -2px #217346;
  color: #217346;
  font-size: 20px;
}
.addsheet {
  margin-left: 38px;
}
.sheetbar .dots {
  justify-content: center;
  margin-left: auto;
  padding-right: 17px;
}
.hscroll {
  display: flex;
  flex: 0 0 724px;
  align-self: flex-start;
  margin: 3px 29px 0 0;
  background: #dadada;
}
.hscroll .thumb {
  flex: 1;
  margin: 0 52px 0 -1px;
}

/* status bar */
.status {
  flex: none;
  display: flex;
  align-items: center;
  height: 32px;
  padding: 0 11px;
  background: #f3f3f3;
}
.status > svg {
  margin-left: 27px;
}
.views {
  display: flex;
  margin-left: auto;
}
.views button {
  width: 60px;
  height: 32px;
}
.views .on {
  background: #c6c6c6;
}
.zoom {
  display: flex;
  align-items: center;
  gap: 8px;
  padding-left: 8px;
  font-size: 19px;
}
.zoom span {
  padding-left: 11px;
}
.zoom input {
  appearance: none;
  width: 148px;
  height: 16px;
  background: linear-gradient(#b0b0b0, #b0b0b0) center / 100% 2px no-repeat;
}
.zoom input::-webkit-slider-thumb {
  appearance: none;
  width: 8px;
  height: 16px;
  background: #666;
}

/* taskbar */
.taskbar {
  flex: none;
  display: flex;
  height: 60px;
  background: #1d2324;
}
.sys {
  width: 72px;
}
.split {
  width: 5px;
  height: 36px;
  margin: 12px 17px 12px 9px;
  border: solid #4b4f50;
  border-width: 0 1px;
}
.app {
  position: relative;
  width: 75px;
}
.run::after {
  content: "";
  position: absolute;
  right: 7px;
  bottom: 0;
  left: 7px;
  height: 3px;
  background: #76b9ed;
}
.office b {
  position: absolute;
  left: 20px;
  width: 18px;
  color: #fff;
  font-size: 14px;
  text-align: center;
}
.current {
  background: linear-gradient(90deg, #4b5152 67px, #333839 67px, #333839 69px, #3e4344 69px);
}
.current::after {
  right: 0;
  left: 0;
}
.tray {
  display: flex;
  align-items: center;
  gap: 14px;
  margin-left: auto;
  padding-right: 254px;
}
.tray svg:first-child {
  margin-right: 10px;
}

/* overlays */
.mosaic {
  position: absolute;
  right: 0;
  bottom: 0;
}
.watermark {
  position: absolute;
  right: 100px;
  bottom: 38px;
  pointer-events: none;
}
.ink {
  fill: rgba(255, 255, 255, 0.85);
  stroke: rgba(0, 0, 0, 0.16);
  stroke-width: 2px;
}
.wm-bai {
  font: 700 78px "Liberation Sans", sans-serif;
}
.wm-du {
  font: 700 52px "Liberation Sans", sans-serif;
}
.wm-cn {
  font: 900 58px "Noto Sans CJK SC", sans-serif;
}
.wm-url {
  fill: rgba(255, 255, 255, 0.85);
  stroke: rgba(0, 0, 0, 0.16);
  stroke-width: 1px;
  font: 600 38px "Noto Sans", sans-serif;
}
.meter {
  position: absolute;
  top: 695px;
  right: 0;
  width: 15px;
  height: 88px;
  padding: 10px 2px 10px 6px;
  background: #52586a;
  border: 1px solid #3a3e48;
  border-right: none;
  border-radius: 6px 0 0 6px;
}
.meter i {
  display: block;
  height: 68px;
  background:
    repeating-linear-gradient(transparent 0 2px, #454a58 2px 4px),
    linear-gradient(#30333b 44%, #c9c84c 44%, #8fcf72 70%, #45c9b4);
}
```
